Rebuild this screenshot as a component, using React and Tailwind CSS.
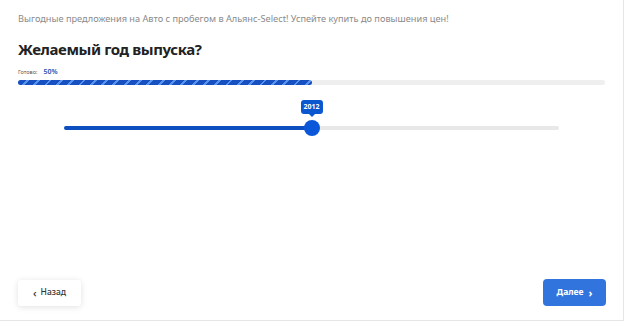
export default function App() {
  return (
    <div className="h-[323px] w-[626px] bg-white" style={{ fontFamily: '"Noto Sans", sans-serif' }}>
      <div className="flex h-[321px] w-[624px] flex-col border-b border-r border-[#e6e6e6] px-[18px]">
        <p className="mt-[12px] text-[9.2px] leading-[14px] text-[#8a8a8a]">
          Выгодные предложения на Авто с пробегом в Альянс-Select! Успейте купить до повышения цен!
        </p>
        <h1 className="mt-[12px] text-[15px] font-bold leading-[22px] tracking-[-0.4px] text-[#222]">Желаемый год выпуска?</h1>

        {/* Progress */}
        <div className="mt-[8px] flex items-center gap-[6px]">
          <span className="text-[5.5px] leading-[8px] text-[#555]">Готово:</span>
          <span className="text-[7px] font-semibold leading-[8px] text-[#1d4fb0]">50%</span>
        </div>
        <div className="mt-[4px] h-[5px] w-full rounded-full bg-[#efefef]">
          <div className="h-full w-1/2 rounded-full bg-[repeating-linear-gradient(135deg,#1750c0_0px,#1750c0_6px,#5a93ec_6px,#5a93ec_8px)]" />
        </div>

        {/* Slider */}
        <div className="relative mx-[46px] mt-[41px] h-[4px] rounded-full bg-[#e8e8e8]">
          <div className="h-full w-1/2 rounded-full bg-[#0d4fbf]" />
          <div className="absolute left-1/2 top-1/2 h-[16px] w-[16px] -translate-x-1/2 -translate-y-1/2 rounded-full bg-[#0b57d9]" />
          <div className="absolute bottom-[13px] left-1/2 -translate-x-1/2">
            <div className="rounded-[3px] bg-[#0b57d0] px-[3px] py-[2px] text-[7px] font-bold leading-[10px] text-white">
              2012
            </div>
            <div className="mx-auto h-0 w-0 border-x-[3px] border-t-[3px] border-x-transparent border-t-[#0b57d0]" />
          </div>
        </div>

        <div className="mt-auto mb-[14px] flex items-center justify-between">
          <button className="flex h-[26px] w-[63px] items-center justify-center gap-[4px] rounded-[3px] bg-white text-[8.5px] font-medium text-[#333] shadow-[0_1px_6px_rgba(0,0,0,0.12)]">
            <span className="text-[11px] leading-none">‹</span>
            Назад
          </button>
          <button className="ml-auto mr-[-1px] flex h-[27px] w-[63px] items-center justify-center gap-[5px] rounded-[4px] bg-[#3274dd] text-[8.5px] font-bold text-white">
            Далее
            <span className="text-[11px] leading-none">›</span>
          </button>
        </div>
      </div>
    </div>
  );
}
